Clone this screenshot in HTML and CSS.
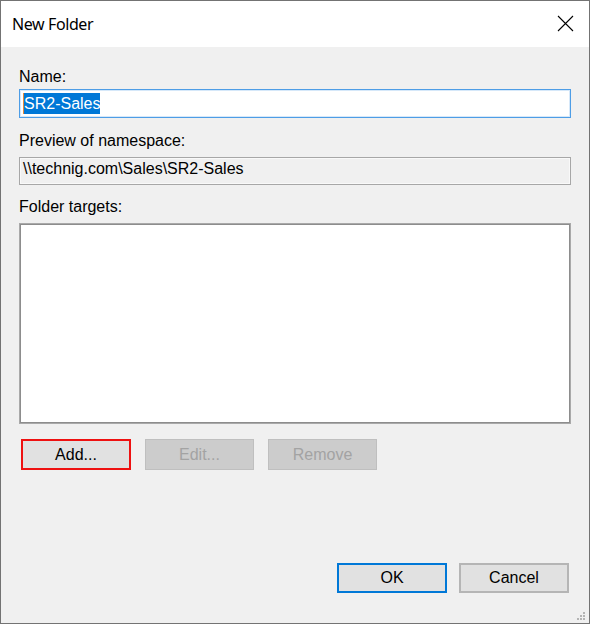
FILE: index.html
```html
<!DOCTYPE html>
<html lang="en">
<head>
    <meta charset="UTF-8">
    <meta name="viewport" content="width=device-width, initial-scale=1.0">
    <title>New Folder</title>
    <link rel="stylesheet" href="styles.css">
</head>
<body>
    <div class="window">
        <div class="titlebar">
            <span class="title">New Folder</span>
            <span class="close">
                <svg width="17" height="17" viewBox="0 0 17 17">
                    <path d="M1 1 L16 16 M16 1 L1 16" stroke="#000" stroke-width="1.1" fill="none"/>
                </svg>
            </span>
        </div>

        <div class="content">
            <div class="field-label name-label">Name:</div>
            <div class="textbox focused"><span class="selection">SR2-Sales</span></div>

            <div class="field-label preview-label">Preview of namespace:</div>
            <div class="textbox readonly">\\technig.com\Sales\SR2-Sales</div>

            <div class="field-label targets-label">Folder targets:</div>
            <div class="listbox"></div>

            <div class="target-buttons">
                <button class="btn btn-marked">Add...</button>
                <button class="btn" disabled>Edit...</button>
                <button class="btn" disabled>Remove</button>
            </div>

            <div class="dialog-buttons">
                <button class="btn btn-default">OK</button>
                <button class="btn btn-cancel">Cancel</button>
            </div>
        </div>

        <svg class="grip" width="10" height="10" viewBox="0 0 10 10">
            <rect x="7" y="1" width="2" height="2" fill="#b4b4b4"/>
            <rect x="4" y="4" width="2" height="2" fill="#b4b4b4"/>
            <rect x="7" y="4" width="2" height="2" fill="#b4b4b4"/>
            <rect x="1" y="7" width="2" height="2" fill="#b4b4b4"/>
            <rect x="4" y="7" width="2" height="2" fill="#b4b4b4"/>
            <rect x="7" y="7" width="2" height="2" fill="#b4b4b4"/>
        </svg>
    </div>
</body>
</html>
```

FILE: styles.css
```css
* {
    margin: 0;
    padding: 0;
    box-sizing: border-box;
    font-family: "Liberation Sans", Arial, sans-serif;
}

body {
    background-color: #f0f0f0;
}

.window {
    position: relative;
    width: 590px;
    height: 624px;
    border: 1px solid #737373;
    background-color: #f0f0f0;
    display: flex;
    flex-direction: column;
}

.titlebar {
    height: 46px;
    background: white;
    display: flex;
    justify-content: space-between;
    align-items: center;
    padding: 0 15px 0 11px;
}

.title {
    font-family: "Noto Sans", sans-serif;
    font-size: 16px;
    letter-spacing: -0.4px;
    color: #000;
    margin-top: -1px;
}

.close {
    display: flex;
    margin-top: -1px;
}

.content {
    flex: 1;
    display: flex;
    flex-direction: column;
    padding: 21px 18px 30px 18px;
}

.field-label {
    font-size: 16px;
    line-height: 18px;
    color: #000;
}

.preview-label {
    margin-top: 14px;
}

.targets-label {
    margin-top: 13px;
}

.textbox {
    font-size: 16px;
    color: #000;
}

.textbox.focused {
    margin-top: 3px;
    height: 29px;
    display: flex;
    align-items: center;
    padding: 0 3px;
    background: white;
    border: 1px solid #4d9de6;
    box-shadow: inset 0 0 0 1px #d6e8f9;
}

.selection {
    display: inline-block;
    height: 21px;
    line-height: 21px;
    background-color: #0078d7;
    color: white;
    border-left: 1px solid #e38a3c;
}

.textbox.readonly {
    margin-top: 7px;
    height: 28px;
    padding: 1px 3px;
    line-height: 20px;
    border: 1px solid #a7a7a7;
    box-shadow: inset 0 0 0 1px #f9f9f9;
}

.listbox {
    margin-top: 7px;
    height: 201px;
    background: white;
    border: 1px solid #a9a9a9;
    box-shadow: inset 0 0 0 1px #8d8d8d;
}

.target-buttons {
    display: flex;
    gap: 14px;
    margin-top: 15px;
    padding-left: 2px;
}

.btn {
    height: 31px;
    width: 110px;
    font-size: 16px;
    color: #000;
    background-color: #e1e1e1;
    border: 1px solid #adadad;
}

.btn:disabled {
    width: 109px;
    color: #a3a3a3;
    background-color: #cccccc;
    border-color: #bfbfbf;
}

.btn-marked {
    border: 2px solid #ee1111;
}

.dialog-buttons {
    margin-top: auto;
    display: flex;
    justify-content: flex-end;
    gap: 12px;
    padding-right: 2px;
}

.dialog-buttons .btn {
    height: 30px;
}

.btn-default {
    border: 2px solid #0078d7;
}

.btn-cancel {
    border: 2px solid #b5b5b5;
}

.grip {
    position: absolute;
    right: 3px;
    bottom: 2px;
}
```
